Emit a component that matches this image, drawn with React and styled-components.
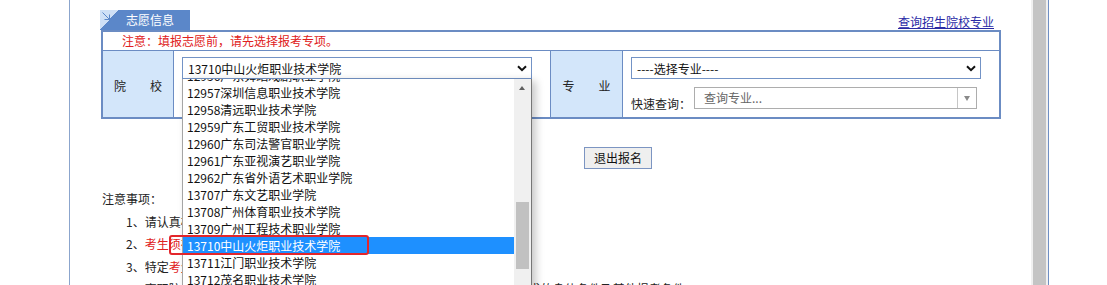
import React from "react";
import styled, { createGlobalStyle } from "styled-components";

const GlobalStyle = createGlobalStyle`
  html, body { margin: 0; padding: 0; background: #fff; overflow: hidden; }
  body {
    font-family: "Noto Sans CJK SC", "Liberation Sans", sans-serif;
    font-size: 12px;
    color: #222;
  }
  * { box-sizing: border-box; }
`;

const Page = styled.div`
  display: flex;
  height: 285px;
  padding-left: 69px;
`;

const Frame = styled.div`
  display: flex;
  height: 100%;
  border-left: 1px solid #8ba5cd;
  border-right: 1px solid #6f8fc4;
`;

const Content = styled.div`
  width: 961px;
  padding: 10px 0 0 31px;
`;

const ScrollTrack = styled.div`
  width: 17px;
  height: 100%;
  background: #f0f0f0;
  padding: 0 2px;
`;

const ScrollThumb = styled.div`
  height: 100%;
  background: #c4c4c4;
`;

const Header = styled.div`
  width: 900px;
  height: 20px;
  display: flex;
  justify-content: space-between;
  align-items: center;
  padding-right: 7px;
`;

const Tab = styled.div`
  width: 90px;
  height: 20px;
  margin-left: -1px;
  position: relative;
  color: #fff;
  font-size: 12px;
  line-height: 20px;
  padding-left: 26px;
  background:
    linear-gradient(to top left, #5b87c9 50%, #cfe0f6 50%) left top / 18px 20px no-repeat,
    #5b87c9;
`;

const TabIcon = styled.svg`
  position: absolute;
  left: 2px;
  top: 2px;
`;

const HeadLink = styled.a`
  color: #2a2aa5;
  text-decoration: underline;
  font-size: 12px;
  line-height: 14px;
  margin-top: 4px;
  cursor: pointer;
`;

const Box = styled.div`
  width: 900px;
  border: 2px solid #6b8cc3;
`;

const NoticeRow = styled.div`
  height: 19px;
  line-height: 18px;
  padding-left: 19px;
  color: #e02020;
  border-bottom: 1px solid #6b8cc3;
`;

const MainGrid = styled.div`
  display: grid;
  grid-template-columns: 71px 377px 72px 1fr;
  height: 66px;
`;

const LabelCell = styled.div`
  background: #d3e6fa;
  border-right: 1px solid #6b8cc3;
  display: flex;
  align-items: center;
  justify-content: center;
  padding-top: 2px;
  font-size: 12px;
  color: #222;
  white-space: pre;
`;

const FieldCell = styled.div`
  padding: 6px 0 0 8px;
  border-right: ${(p) => (p.$divider ? "1px solid #6b8cc3" : "none")};
`;

const SelectWrap = styled.div`
  position: relative;
  width: 350px;
`;

const FakeSelect = styled.div`
  width: 350px;
  height: 22px;
  border: 1px solid #7393c6;
  background: #fff;
  display: flex;
  align-items: center;
  justify-content: space-between;
  padding: 0 4px 0 5px;
  font-size: 12px;
  color: #111;
`;

const QuickRow = styled.div`
  display: flex;
  align-items: flex-end;
  margin-top: 8px;
  gap: 3px;
`;

const QuickLabel = styled.span`
  font-size: 12px;
  line-height: 14px;
  margin-bottom: -2px;
  color: #222;
`;

const ComboInput = styled.div`
  width: 283px;
  height: 22px;
  border: 1px solid #adadad;
  display: flex;
  background: #fff;
`;

const ComboText = styled.div`
  flex: 1;
  padding-left: 9px;
  line-height: 20px;
  color: #666;
  font-size: 12px;
`;

const ComboButton = styled.div`
  width: 19px;
  border-left: 1px solid #c6c6c6;
  display: flex;
  align-items: center;
  justify-content: center;
  &::after {
    content: "";
    border-left: 3.5px solid transparent;
    border-right: 3.5px solid transparent;
    border-top: 5px solid #8a8a8a;
  }
`;

const ListWrap = styled.div`
  position: absolute;
  top: 100%;
  left: 0;
  width: 350px;
  z-index: 5;
`;

const ListBody = styled.div`
  height: 212px;
  display: flex;
  overflow: hidden;
  background: #fff;
  border-left: 1px solid #a5a5a5;
  border-right: 1px solid #767676;
  box-shadow: 4px 2px 8px rgba(0, 0, 0, 0.22);
`;

const Options = styled.div`
  flex: 1;
  margin-top: -12px;
`;

const Option = styled.div`
  height: 17px;
  line-height: 17px;
  padding-left: 4px;
  white-space: nowrap;
  font-size: 12px;
  color: ${(p) => (p.$active ? "#fff" : "#111")};
  background: ${(p) => (p.$active ? "#1e90ff" : "transparent")};
`;

const ListScroll = styled.div`
  width: 17px;
  background: #f0f0f0;
  position: relative;
  flex-shrink: 0;
  &::before {
    content: "";
    position: absolute;
    top: 7px;
    left: 5px;
    border-left: 3.5px solid transparent;
    border-right: 3.5px solid transparent;
    border-bottom: 4px solid #606060;
  }
`;

const ListThumb = styled.div`
  position: absolute;
  top: 123px;
  left: 2px;
  width: 13px;
  height: 67px;
  background: #c1c1c1;
`;

const Annotation = styled.div`
  position: absolute;
  left: -13px;
  top: 156px;
  width: 200px;
  height: 20px;
  border: 2px solid #e3262b;
  border-radius: 3px;
`;

const ButtonRow = styled.div`
  padding: 28px 0 0 483px;
`;

const Button = styled.button`
  height: 22px;
  padding: 0 9px;
  border: 1px solid #7c95c2;
  background: #efefef;
  font-family: inherit;
  font-size: 12px;
  line-height: 20px;
  color: #111;
`;

const Notes = styled.div`
  margin-top: 19px;
  line-height: 22.5px;
  font-size: 12px;
  color: #222;
`;

const NoteItem = styled.div`
  padding-left: ${(p) => (p.$indent ? "25px" : "1px")};
  white-space: nowrap;
`;

const Red = styled.span`
  color: #e02020;
`;

const Chevron = () => (
  <svg width="10" height="7" viewBox="0 0 10 7">
    <path d="M1 1.2 L5 5.2 L9 1.2" fill="none" stroke="#111" strokeWidth="2" />
  </svg>
);

const schools = [
  "12956广东舞蹈戏剧职业学院",
  "12957深圳信息职业技术学院",
  "12958清远职业技术学院",
  "12959广东工贸职业技术学院",
  "12960广东司法警官职业学院",
  "12961广东亚视演艺职业学院",
  "12962广东省外语艺术职业学院",
  "13707广东文艺职业学院",
  "13708广州体育职业技术学院",
  "13709广州工程技术职业学院",
  "13710中山火炬职业技术学院",
  "13711江门职业技术学院",
  "13712茂名职业技术学院",
  "13713广东环境保护工程职业学院",
];

export default function App() {
  const selected = "13710中山火炬职业技术学院";
  return (
    <>
      <GlobalStyle />
      <Page>
        <Frame>
          <Content>
            <Header>
              <Tab>
                <TabIcon width="9" height="9" viewBox="0 0 9 9">
                  <path d="M0.5 0.5 L7.5 7.5 M7.5 2.5 L7.5 7.5 L2.5 7.5" fill="none" stroke="#5b87c9" strokeWidth="1" />
                </TabIcon>
                志愿信息
              </Tab>
              <HeadLink>查询招生院校专业</HeadLink>
            </Header>
            <Box>
              <NoticeRow>注意：填报志愿前，请先选择报考专项。</NoticeRow>
              <MainGrid>
                <LabelCell>{"院　　校"}</LabelCell>
                <FieldCell $divider>
                  <SelectWrap>
                    <FakeSelect>
                      <span>{selected}</span>
                      <Chevron />
                    </FakeSelect>
                    <ListWrap>
                      <ListBody>
                        <Options>
                          {schools.map((s) => (
                            <Option key={s} $active={s === selected}>
                              {s}
                            </Option>
                          ))}
                        </Options>
                        <ListScroll>
                          <ListThumb />
                        </ListScroll>
                      </ListBody>
                      <Annotation />
                    </ListWrap>
                  </SelectWrap>
                </FieldCell>
                <LabelCell>{"专　　业"}</LabelCell>
                <FieldCell>
                  <FakeSelect>
                    <span>----选择专业----</span>
                    <Chevron />
                  </FakeSelect>
                  <QuickRow>
                    <QuickLabel>快速查询：</QuickLabel>
                    <ComboInput>
                      <ComboText>查询专业...</ComboText>
                      <ComboButton />
                    </ComboInput>
                  </QuickRow>
                </FieldCell>
              </MainGrid>
            </Box>
            <ButtonRow>
              <Button>退出报名</Button>
            </ButtonRow>
            <Notes>
              <NoteItem>注意事项：</NoteItem>
              <NoteItem $indent>1、请认真核对所填报的院校及专业信息。</NoteItem>
              <NoteItem $indent>
                2、<Red>考生须在规定时间内完成志愿填报。</Red>
              </NoteItem>
              <NoteItem $indent>
                3、特定<Red>考生须按要求填报。</Red>
              </NoteItem>
              <NoteItem $indent>
                4、高职院校将根据考生志愿及成绩择优录取，考生须符合报考院校专业所要求的身体条件及其他报考条件。
              </NoteItem>
            </Notes>
          </Content>
          <ScrollTrack>
            <ScrollThumb />
          </ScrollTrack>
        </Frame>
      </Page>
    </>
  );
}
